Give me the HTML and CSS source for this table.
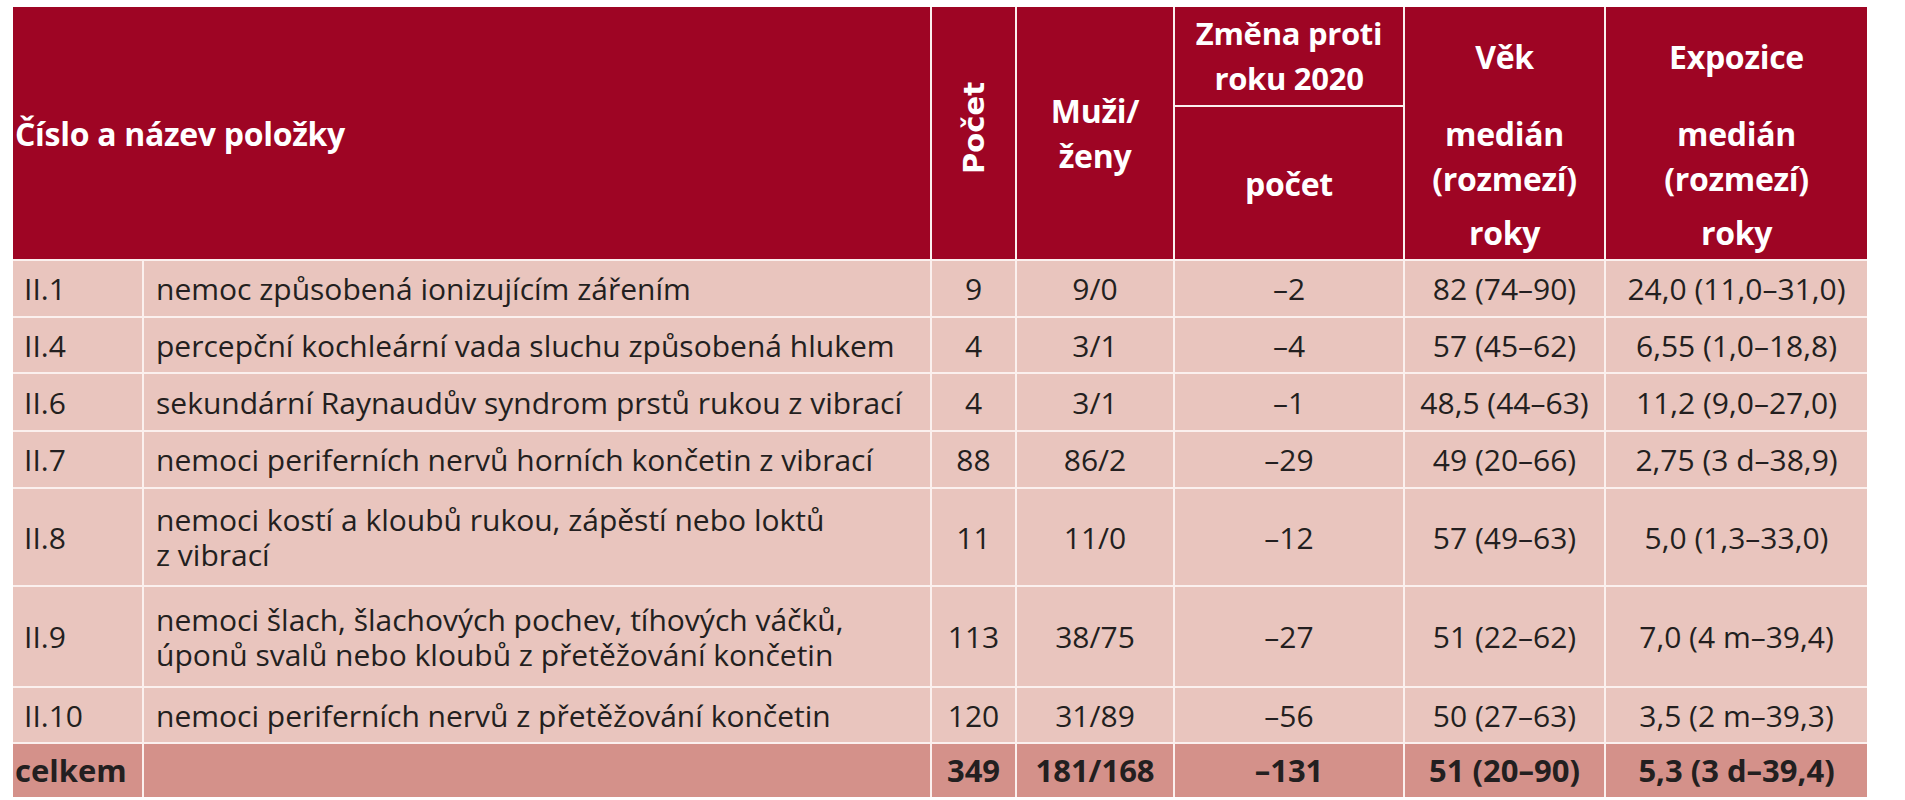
FILE: index.html
```html
<!DOCTYPE html>
<html lang="cs">
<head>
<meta charset="utf-8">
<title>Tabulka</title>
<link rel="stylesheet" href="styles.css">
</head>
<body>
<table class="t">
  <colgroup>
    <col class="c1"><col class="c2"><col class="c3"><col class="c4"><col class="c5"><col class="c6"><col class="c7">
  </colgroup>
  <thead>
    <tr class="ha">
      <th colspan="2" rowspan="2" class="name">Číslo a název položky</th>
      <th rowspan="2" class="vert"><span>Počet</span></th>
      <th rowspan="2" class="mz">Muži/<br>ženy</th>
      <th class="chg">Změna proti<br>roku 2020</th>
      <th class="open-b">Věk</th>
      <th class="open-b">Expozice</th>
    </tr>
    <tr class="hb">
      <th class="cnt">počet</th>
      <th class="open-t"><div class="stack"><span>medián</span><span>(rozmezí)</span><span class="unit">roky</span></div></th>
      <th class="open-t"><div class="stack"><span>medián</span><span>(rozmezí)</span><span class="unit">roky</span></div></th>
    </tr>
  </thead>
  <tbody>
    <tr class="r57"><td class="id">II.1</td><td class="desc">nemoc způsobená ionizujícím zářením</td><td>9</td><td>9/0</td><td>–2</td><td>82 (74–90)</td><td>24,0 (11,0–31,0)</td></tr>
    <tr class="r56"><td class="id">II.4</td><td class="desc">percepční kochleární vada sluchu způsobená hlukem</td><td>4</td><td>3/1</td><td>–4</td><td>57 (45–62)</td><td>6,55 (1,0–18,8)</td></tr>
    <tr class="r58"><td class="id">II.6</td><td class="desc">sekundární Raynaudův syndrom prstů rukou z vibrací</td><td>4</td><td>3/1</td><td>–1</td><td>48,5 (44–63)</td><td>11,2 (9,0–27,0)</td></tr>
    <tr class="r57"><td class="id">II.7</td><td class="desc">nemoci periferních nervů horních končetin z vibrací</td><td>88</td><td>86/2</td><td>–29</td><td>49 (20–66)</td><td>2,75 (3 d–38,9)</td></tr>
    <tr class="r98"><td class="id">II.8</td><td class="desc">nemoci kostí a kloubů rukou, zápěstí nebo loktů<br>z vibrací</td><td>11</td><td>11/0</td><td>–12</td><td>57 (49–63)</td><td>5,0 (1,3–33,0)</td></tr>
    <tr class="r101"><td class="id">II.9</td><td class="desc">nemoci šlach, šlachových pochev, tíhových váčků,<br>úponů svalů nebo kloubů z přetěžování končetin</td><td>113</td><td>38/75</td><td>–27</td><td>51 (22–62)</td><td>7,0 (4 m–39,4)</td></tr>
    <tr class="r56"><td class="id">II.10</td><td class="desc">nemoci periferních nervů z přetěžování končetin</td><td>120</td><td>31/89</td><td>–56</td><td>50 (27–63)</td><td>3,5 (2 m–39,3)</td></tr>
    <tr class="total"><td class="id">celkem</td><td class="desc"></td><td>349</td><td>181/168</td><td>–131</td><td>51 (20–90)</td><td>5,3 (3 d–39,4)</td></tr>
  </tbody>
</table>
</body>
</html>
```

FILE: styles.css
```css
html, body {
  margin: 0;
  padding: 0;
  background: #ffffff;
}
body {
  padding: 7px 0 0 13px;
  font-family: "Open Sans", "Noto Sans", sans-serif;
  color: #231f20;
}
.t {
  border-collapse: collapse;
  table-layout: fixed;
  width: 1854px;
}
.c1 { width: 130px; }
.c2 { width: 788px; }
.c3 { width: 85px; }
.c4 { width: 158px; }
.c5 { width: 230px; }
.c6 { width: 201px; }
.c7 { width: 262px; }

.t th, .t td {
  border: 2px solid #fbf0ee;
  padding: 0;
}
.t tr:first-child > * { border-top: none; }
.t tr > *:first-child { border-left: none; }
.t tr > *:last-child { border-right: none; }
.t tbody tr:last-child > * { border-bottom: none; }

.t th {
  background: #9e0524;
  color: #ffffff;
  font-weight: 700;
  font-size: 32px;
  line-height: 45px;
  letter-spacing: -0.3px;
  text-align: center;
  vertical-align: middle;
}
.t th.chg { font-size: 31px; }
.ha { height: 99px; }
.hb { height: 154px; }
.t th.name {
  text-align: left;
  padding-left: 2px;
}
.vert span {
  display: inline-block;
  writing-mode: vertical-rl;
  transform: rotate(180deg);
  font-family: "DejaVu Sans", "Open Sans", sans-serif;
  font-size: 29px;
  line-height: 32px;
  letter-spacing: 0;
}
.open-b { border-bottom-style: hidden !important; }
.open-t { border-top-style: hidden !important; }
.stack {
  display: flex;
  flex-direction: column;
  align-items: center;
  padding-top: 1px;
}
.stack .unit { margin-top: 9px; }

.t td {
  background: #e9c5be;
  font-size: 30px;
  line-height: 35px;
  text-align: center;
  vertical-align: middle;
}
.t td.id {
  text-align: left;
  padding-left: 11px;
}
.t td.desc {
  text-align: left;
  padding-left: 12px;
}
.r56 { height: 56px; }
.r57 { height: 57px; }
.r58 { height: 58px; }
.r98 { height: 98px; }
.r101 { height: 101px; }
.total { height: 54px; }
.t .total td {
  background: #d4918a;
  font-weight: 700;
  font-size: 31px;
}
.t .total td.id { padding-left: 2px; }
```
